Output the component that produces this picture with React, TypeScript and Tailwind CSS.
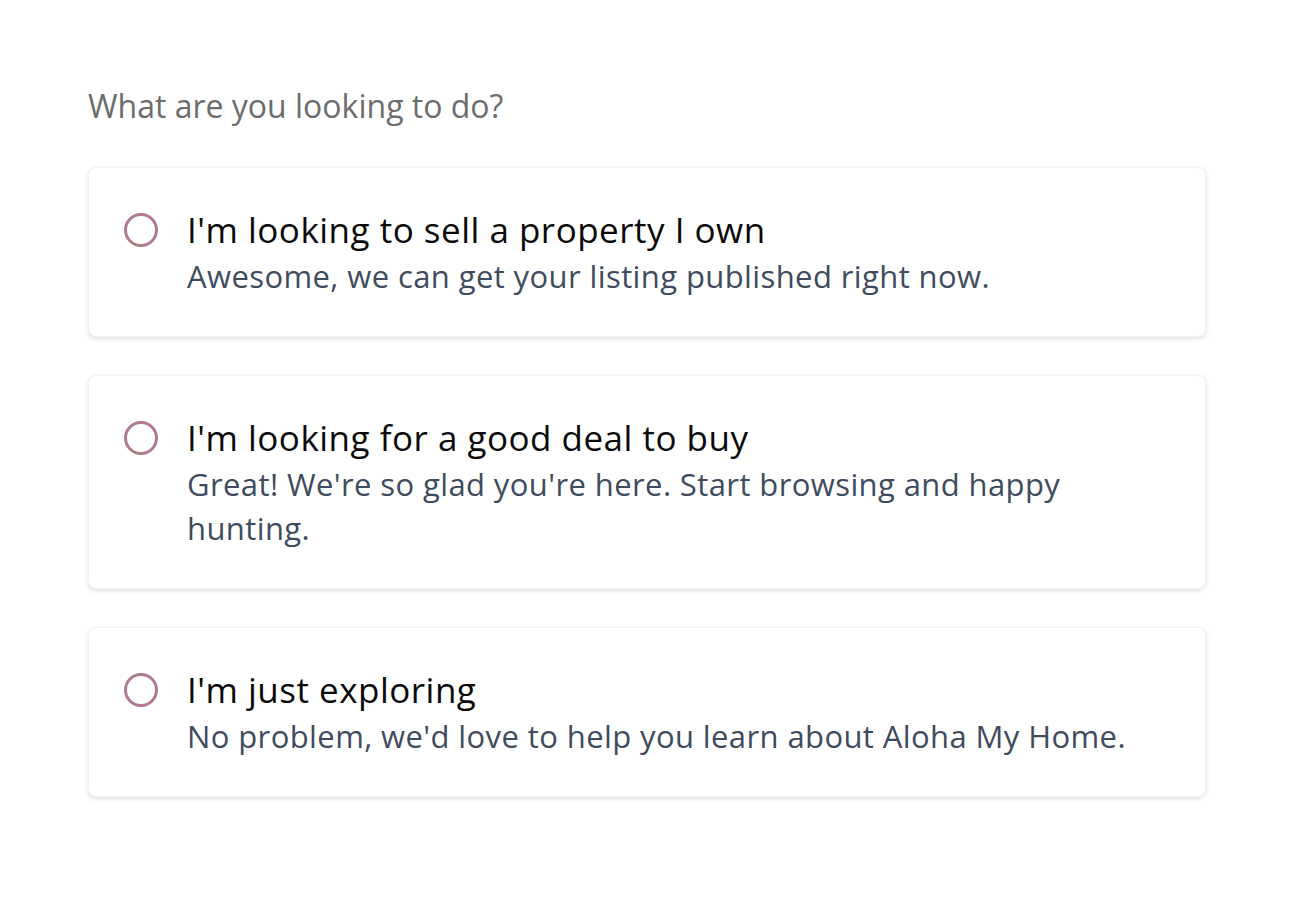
import { useState } from 'react'

const options = [
  {
    id: 'sell',
    title: "I'm looking to sell a property I own",
    description: 'Awesome, we can get your listing published right now.',
  },
  {
    id: 'buy',
    title: "I'm looking for a good deal to buy",
    description: "Great! We're so glad you're here. Start browsing and happy hunting.",
  },
  {
    id: 'explore',
    title: "I'm just exploring",
    description: "No problem, we'd love to help you learn about Aloha My Home.",
  },
]

export default function App() {
  const [selected, setSelected] = useState<string | null>(null)

  return (
    <div className="min-h-screen bg-white font-['Open_Sans',sans-serif]">
      <div className="pl-[88px] pr-[90px] pt-[87px]">
        <h2 className="text-[32px] leading-[38px] text-[#6d6d6d]">What are you looking to do?</h2>

        <div className="mt-[42px] flex flex-col gap-[38px]">
          {options.map((option) => (
            <button
              key={option.id}
              onClick={() => setSelected(option.id)}
              className="flex items-start rounded-lg border border-[#f2f2f2] bg-white pt-[38px] pb-[38px] pl-[35px] pr-[60px] text-left shadow-[0_2px_5px_rgba(0,0,0,0.12)]"
            >
              <div className="mt-[7px] flex h-[34px] w-[34px] flex-shrink-0 items-center justify-center rounded-full border-[3px] border-[#b07c86]">
                {selected === option.id && <div className="h-[16px] w-[16px] rounded-full bg-[#b07c86]" />}
              </div>
              <div className="ml-[29px]">
                <p className="text-[35px] leading-[48px] tracking-[0.5px] text-[#0a0a0a]">{option.title}</p>
                <p className="text-[31px] leading-[44px] tracking-[0.4px] text-[#3f4b5e]">{option.description}</p>
              </div>
            </button>
          ))}
        </div>
      </div>
    </div>
  )
}
